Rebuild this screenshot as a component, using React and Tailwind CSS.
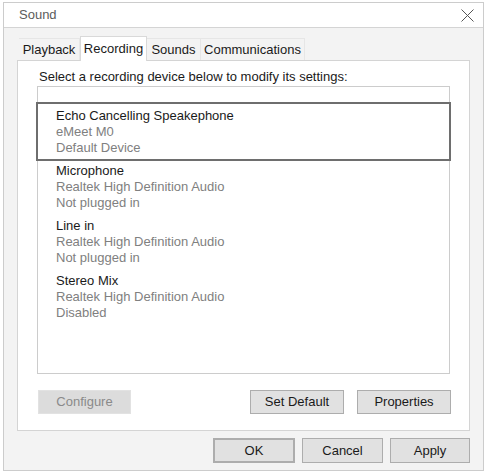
import React from "react";

// Recording devices
const devices = [
  { name: "Echo Cancelling Speakephone", driver: "eMeet M0", status: "Default Device", selected: true },
  { name: "Microphone", driver: "Realtek High Definition Audio", status: "Not plugged in" },
  { name: "Line in", driver: "Realtek High Definition Audio", status: "Not plugged in" },
  { name: "Stereo Mix", driver: "Realtek High Definition Audio", status: "Disabled" },
];

const tabs = [
  { label: "Playback", w: "w-[61px]" },
  { label: "Recording", w: "w-[67px]", active: true },
  { label: "Sounds", w: "w-[54px]" },
  { label: "Communications", w: "w-[104px]" },
];

const Btn = ({ children, className = "" }) => (
  <button className={`h-[24px] flex items-center justify-center text-[13px] text-[#1a1a1a] bg-[#e1e1e1] border border-[#adadad] ${className}`}>
    {children}
  </button>
);

export default function App() {
  return (
    <div className="w-[487px] h-[476px] bg-white pt-[2px] pl-[3px] font-['Liberation_Sans',Arial,sans-serif]">
      <div className="w-[481px] h-[469px] border border-[#cccccc] bg-[#f3f3f3] flex flex-col">
        {/* title bar */}
        <div className="h-[25px] bg-white border-b border-[#d4d4d4] flex items-center justify-between pl-[15px] pr-[9px] shrink-0">
          <span className="text-[13px] text-[#5c5c5c]">Sound</span>
          <svg width="13" height="13" viewBox="0 0 13 13" className="mt-[1px]">
            <path d="M0.5 0.5 L12.5 12.5 M12.5 0.5 L0.5 12.5" stroke="#555" strokeWidth="1" fill="none" />
          </svg>
        </div>

        <div className="px-[13px] pt-[8px] flex flex-col">
          {/* tabs */}
          <div className="h-[24px] flex items-end pl-[2px]">
            {tabs.map((t) =>
              t.active ? (
                <div
                  key={t.label}
                  className={`${t.w} h-[25px] -mb-px relative z-10 bg-white border border-b-0 border-[#d9d9d9] flex items-center justify-center text-[13px] text-[#1a1a1a]`}
                >
                  {t.label}
                </div>
              ) : (
                <div
                  key={t.label}
                  className={`${t.w} h-[22px] border-t border-r border-[#e6e6e6] flex items-center justify-center text-[13px] text-[#1a1a1a]`}
                >
                  {t.label}
                </div>
              )
            )}
          </div>

          {/* panel */}
          <div className="w-[453px] h-[371px] bg-white border border-[#d4d4d4] flex flex-col">
            <div className="pl-[21px] pt-[8px] h-[24px] leading-[16px] text-[13px] text-[#1a1a1a]">
              Select a recording device below to modify its settings:
            </div>
            <div className="ml-[19px] mt-px w-[413px] h-[288px] border border-[#cccccc] pt-[17px]">
              {devices.map((d) => (
                <div
                  key={d.name}
                  className={`h-[55px] pt-[4px] pl-[18px] text-[13px] leading-[16px] ${d.selected ? "outline-2 outline-[#6e6e6e]" : ""}`}
                >
                  <div className="text-[#1a1a1a]">{d.name}</div>
                  <div className="text-[#808080]">{d.driver}</div>
                  <div className="text-[#808080]">{d.status}</div>
                </div>
              ))}
            </div>
            <div className="flex items-center mt-[16px] pl-[20px] pr-[18px]">
              <button className="w-[93px] h-[24px] flex items-center justify-center text-[13px] text-[#8a8a8a] bg-[#dcdcdc] border border-[#e2e2e2]">
                Configure
              </button>
              <div className="flex-1" />
              <Btn className="w-[94px]">Set Default</Btn>
              <Btn className="w-[94px] ml-[13px]">Properties</Btn>
            </div>
          </div>

          {/* dialog buttons */}
          <div className="flex justify-end gap-[7px] mt-[7px]">
            <Btn className="w-[82px] h-[25px] border-2 border-[#707070]">OK</Btn>
            <Btn className="w-[81px] h-[25px]">Cancel</Btn>
            <Btn className="w-[80px] h-[25px]">Apply</Btn>
          </div>
        </div>
      </div>
    </div>
  );
}
